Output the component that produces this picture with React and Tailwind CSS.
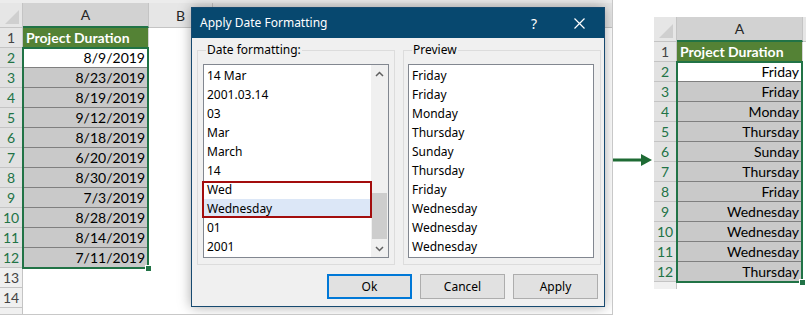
import React from "react";

const leftDates = [
  "8/9/2019",
  "8/23/2019",
  "8/19/2019",
  "9/12/2019",
  "8/18/2019",
  "6/20/2019",
  "8/30/2019",
  "7/3/2019",
  "8/28/2019",
  "8/14/2019",
  "7/11/2019",
];

const weekdays = [
  "Friday",
  "Friday",
  "Monday",
  "Thursday",
  "Sunday",
  "Thursday",
  "Friday",
  "Wednesday",
  "Wednesday",
  "Wednesday",
  "Thursday",
];

const formats = ["14 Mar", "2001.03.14", "03", "Mar", "March", "14", "Wed", "Wednesday", "01", "2001"];
const preview = ["Friday", "Friday", "Monday", "Thursday", "Sunday", "Thursday", "Friday", "Wednesday", "Wednesday", "Wednesday"];

function Corner() {
  return (
    <svg width="22" height="24" viewBox="0 0 22 24">
      <path d="M19 7 L19 21 L5 21 Z" fill="#cfcfcf" />
    </svg>
  );
}

function Sheet({ values, extraRows = [], showB }) {
  return (
    <div className="relative font-['Lato','Liberation_Sans',sans-serif] text-[14px]">
      {/* column header */}
      <div className="flex h-[25px] bg-[#e6e6e6]">
        <div className="w-[23px] shrink-0 border-r border-b border-[#c4c4c4] flex items-end justify-end">
          <Corner />
        </div>
        <div className="w-[126px] shrink-0 bg-[#d2d2d2] border-r border-[#c4c4c4] border-b-2 border-b-[#217346] flex items-center justify-center text-[#262626]">
          A
        </div>
        <div className="w-[64px] shrink-0 border-r border-b border-[#c4c4c4] flex items-center justify-center text-[#262626]">
          {showB ? "B" : ""}
        </div>
        <div className="flex-1 border-b border-[#c4c4c4]" />
      </div>

      {/* header row */}
      <div className="flex h-[20px]">
        <div className="w-[23px] shrink-0 bg-[#e6e6e6] border-r border-b border-[#c4c4c4] text-[#444] flex items-center justify-center">
          1
        </div>
        <div className="w-[126px] shrink-0 bg-[#548235] text-white font-bold pl-[3px] flex items-center border-r border-b border-[#d4d4d4]">
          Project Duration
        </div>
      </div>

      {values.map((v, i) => (
        <div key={i} className="flex h-[20px]">
          <div className="w-[23px] shrink-0 bg-[#e1e1e1] border-r border-b border-[#c4c4c4] text-[#217346] flex items-center justify-center">
            {i + 2}
          </div>
          <div
            className={`w-[126px] shrink-0 border-r border-b border-[#7f7f7f] flex items-center justify-end pr-[3px] text-black ${
              i === 0 ? "bg-white" : "bg-[#c9c9c9]"
            }`}
          >
            {v}
          </div>
        </div>
      ))}

      {extraRows.map((n, i) => (
        <div key={i} className="flex h-[20px]">
          <div className="w-[23px] shrink-0 bg-[#f0f0f0] border-r border-b border-[#c4c4c4] text-[#444] flex items-center justify-center">
            {n}
          </div>
          <div className="w-[126px] shrink-0" />
        </div>
      ))}

      {/* selection */}
      <div className="absolute left-[22px] top-[44px] w-[127px] h-[222px] border-2 border-[#217346]" />
      <div className="absolute left-[145px] top-[262px] w-[7px] h-[7px] bg-[#217346] border border-white" />
    </div>
  );
}

function Chevron({ down }) {
  return (
    <svg width="9" height="6" viewBox="0 0 9 6">
      <path
        d={down ? "M1 1 L4.5 4.5 L8 1" : "M1 5 L4.5 1.5 L8 5"}
        fill="none"
        stroke="#606060"
        strokeWidth="1.5"
      />
    </svg>
  );
}

function Group({ label, children, pad }) {
  return (
    <div className={`relative w-[198px] h-[215px] border border-[#dcdcdc] pt-[13px] ${pad}`}>
      <span className="absolute -top-[9px] left-[8px] bg-[#f0f0f0] px-[1px] leading-[16px]">{label}</span>
      {children}
    </div>
  );
}

function Dialog() {
  return (
    <div className="absolute left-[191px] top-[7px] w-[414px] h-[300px] bg-[#f0f0f0] border border-[#174a70] shadow-[0_0_12px_rgba(0,0,0,0.35)] font-['Noto_Sans','Liberation_Sans',sans-serif] text-[12px] text-black flex flex-col">
      <div className="h-[30px] shrink-0 bg-[#07486f] text-white flex items-center pl-[8px]">
        <span className="flex-1">Apply Date Formatting</span>
        <span className="text-[14px] mr-[37px]">?</span>
        <svg width="11" height="11" viewBox="0 0 11 11" className="mr-[19px]">
          <path d="M0.5 0.5 L10.5 10.5 M10.5 0.5 L0.5 10.5" stroke="white" strokeWidth="1.2" />
        </svg>
      </div>

      <div className="flex gap-[8px] pl-[5px] pt-[12px]">
        <Group label="Date formatting:" pad="pl-[5px]">
          <div className="w-[186px] h-[194px] border border-[#828790] bg-white flex">
            <div className="relative flex-1 pt-[1px]">
              {formats.map((f, i) => (
                <div
                  key={i}
                  className={`h-[19px] leading-[19px] pl-[3px] ${i === 7 ? "bg-[#dce7f7]" : ""}`}
                >
                  {f}
                </div>
              ))}
              <div className="absolute left-[-2px] top-[116px] w-[170px] h-[37px] border-2 border-[#a30d0d]" />
            </div>
            <div className="w-[17px] bg-[#f0f0f0] flex flex-col">
              <div className="h-[17px] flex items-center justify-center">
                <Chevron />
              </div>
              <div className="flex-1 px-[1px]">
                <div className="mt-[111px] h-[46px] bg-[#cdcdcd]" />
              </div>
              <div className="h-[17px] flex items-center justify-center">
                <Chevron down />
              </div>
            </div>
          </div>
        </Group>

        <Group label="Preview" pad="pl-[4px]">
          <div className="w-[186px] h-[194px] border border-[#828790] bg-white pt-[1px]">
            {preview.map((p, i) => (
              <div key={i} className="h-[19px] leading-[19px] pl-[3px]">
                {p}
              </div>
            ))}
          </div>
        </Group>
      </div>

      <div className="flex justify-end gap-[8px] pr-[6px] mt-[9px]">
        <button className="w-[85px] h-[25px] bg-[#e1e1e1] border-2 border-[#0078d7]">Ok</button>
        <button className="w-[85px] h-[25px] bg-[#e1e1e1] border border-[#adadad]">Cancel</button>
        <button className="w-[85px] h-[25px] bg-[#e1e1e1] border border-[#adadad]">Apply</button>
      </div>
    </div>
  );
}

export default function App() {
  return (
    <div className="w-[806px] h-[318px] bg-white flex overflow-hidden">
      {/* before: sheet with dialog on top */}
      <div className="relative w-[613px] h-[315px] shrink-0 overflow-hidden border-r border-b border-[#c8c8c8] pt-[3px] bg-white">
        <div className="absolute left-0 top-0 w-full h-[3px] bg-[#ececec]" />
        <Sheet values={leftDates} extraRows={[13, 14, ""]} showB />
        <Dialog />
      </div>

      {/* arrow */}
      <div className="w-[41px] shrink-0 mt-[154px]">
        <svg width="41" height="12" viewBox="0 0 41 12">
          <path d="M0 6 H31" stroke="#1e6b34" strokeWidth="3" />
          <path d="M28 0 L39 6 L28 12 Z" fill="#1e6b34" />
        </svg>
      </div>

      {/* after */}
      <div className="w-[152px] h-[272px] shrink-0 mt-[17px] overflow-hidden">
        <Sheet values={weekdays} extraRows={[""]} />
      </div>
    </div>
  );
}
